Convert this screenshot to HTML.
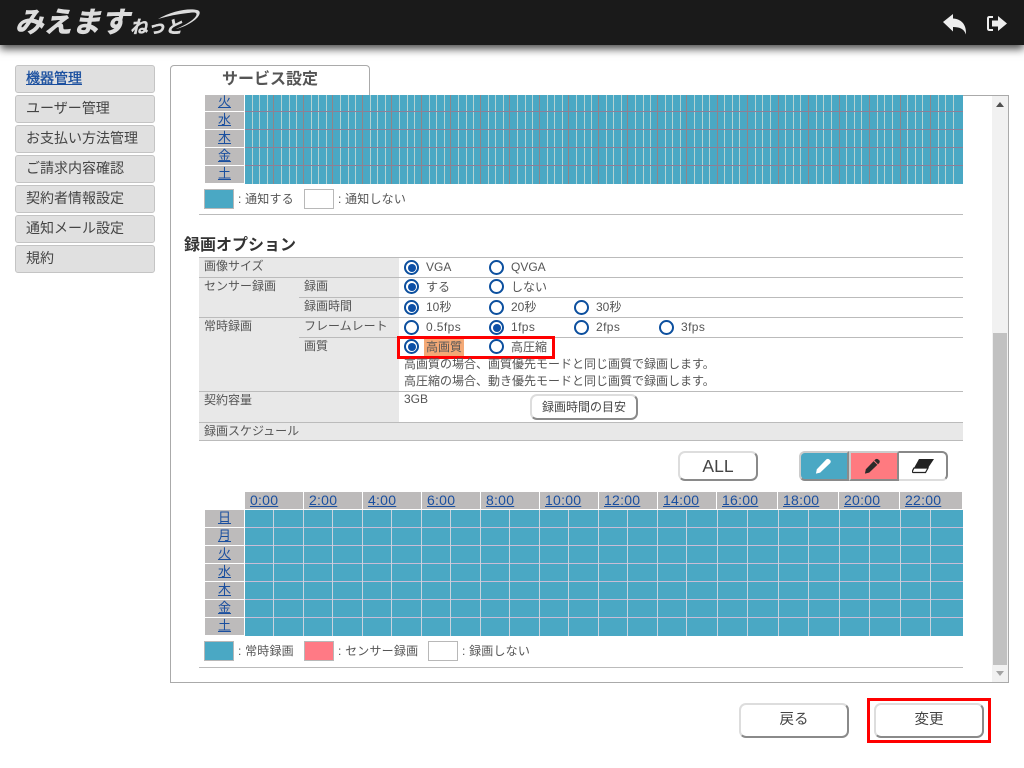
<!DOCTYPE html>
<html lang="ja"><head><meta charset="utf-8"><title>みえますねっと</title>
<style>
*{box-sizing:border-box}
html,body{margin:0;padding:0}
body{width:1024px;height:768px;position:relative;overflow:hidden;background:#fff;font-family:"Liberation Sans","Noto Sans CJK JP",sans-serif;color:#555}
.a,.t,.l,.r,.d,.n,.h,.sq{position:absolute}
.t{font-size:12px;line-height:16px;white-space:nowrap}
.g{letter-spacing:.2px}
.f{letter-spacing:.4px}
.l{height:1px;background:#bbb}
.n{left:15px;width:140px;height:28px;background:#e0e0e0;border:1px solid #c4c4c4;border-radius:3px;font-size:14px;line-height:25px;padding-left:10px;color:#444;white-space:nowrap}
.r{width:15px;height:15px;border:2px solid #0c4f9e;border-radius:50%;background:#fff}
.r.on:after{content:"";position:absolute;left:1.5px;top:1.5px;width:8px;height:8px;border-radius:50%;background:#0c4fa6}
.d{left:205px;width:39px;height:17px;background:#bdbbbb;text-align:center;font-size:13px;line-height:15px;color:#1a4f9f;text-decoration:underline;overflow:hidden}
.h{top:492px;height:17px;background:#bdbbbb;font-size:14px;line-height:16px;color:#1a4f9f;padding-left:5px;white-space:nowrap;letter-spacing:.25px}
.h u{text-decoration:underline}
.sq{width:30px;height:20px;border:1px solid #b8b8b8}
.btn{position:absolute;background:#fff;border:2px solid #ddd;border-right-color:#8a8a8a;border-bottom-color:#8a8a8a;border-radius:7px;text-align:center;color:#444;white-space:nowrap}
</style></head><body>

<div class="a" style="left:0;top:0;width:1024px;height:45px;background:#1a1a1a;box-shadow:0 4px 8px rgba(0,0,0,.7)"></div>
<div class="t" style="left:15px;top:4px;font-size:28.500px;line-height:38px;font-weight:700;font-style:italic;color:#dcdcdc;-webkit-text-stroke:.7px #dcdcdc">みえます</div>
<div class="t" style="left:130px;top:14px;font-size:17.500px;line-height:26px;font-weight:700;font-style:italic;color:#dcdcdc;-webkit-text-stroke:.4px #dcdcdc">ねっと</div>
<svg class="a" style="left:150px;top:5px" width="55" height="28" viewBox="0 0 55 28"><path d="M8 14C22 6 38 3 47 5C52 6 50 12 42 17C36 21 30 23 26 24C33 21 43 16 46 11C48 7 44 7 38 8C28 9 18 11 8 14Z" fill="#dcdcdc"/></svg>
<svg class="a" style="left:942px;top:13px" width="26" height="23" viewBox="0 0 26 23"><path d="M1 9L11 1V5.500C19 6 24.500 11 24 21.500C22 15.500 17 14 11 14V18.500Z" fill="#eee"/></svg>
<svg class="a" style="left:986px;top:14px" width="22" height="20" viewBox="0 0 22 20"><path d="M7 3H3.500Q2 3 2 4.500V14.500Q2 16 3.500 16H7" fill="none" stroke="#eee" stroke-width="2"/><path d="M6 6.500H12V2L21 9.500L12 17V12.500H6Z" fill="#eee"/></svg>

<div class="n" style="top:65px;color:#1a4f9f;-webkit-text-stroke:.35px #1a4f9f;text-decoration:underline">機器管理</div>
<div class="n" style="top:95px">ユーザー管理</div>
<div class="n" style="top:125px">お支払い方法管理</div>
<div class="n" style="top:155px">ご請求内容確認</div>
<div class="n" style="top:185px">契約者情報設定</div>
<div class="n" style="top:215px">通知メール設定</div>
<div class="n" style="top:245px">規約</div>

<div class="a" style="left:170px;top:95px;width:839px;height:588px;border:1px solid #aaa"></div>
<div class="a" style="left:170px;top:65px;width:200px;height:31px;background:#fff;border:1px solid #aaa;border-bottom:0;border-radius:4px 4px 0 0;text-align:center;font-size:16px;font-weight:700;line-height:28px;color:#555">サービス設定</div>

<div class="a" style="left:992px;top:96px;width:16px;height:586px;background:#f1f1f1"></div>
<div class="a" style="left:993px;top:333px;width:14px;height:332px;background:#c1c1c1"></div>
<svg class="a" style="left:992px;top:100px" width="16" height="8"><path d="M4 7L8 2L12 7Z" fill="#505050"/></svg>
<svg class="a" style="left:992px;top:669px" width="16" height="8"><path d="M4 2L8 7L12 2Z" fill="#a3a3a3"/></svg>

<div class="d" style="top:95px;height:16px;line-height:14px">火</div>
<div class="d" style="top:112px">水</div>
<div class="d" style="top:130px">木</div>
<div class="d" style="top:148px">金</div>
<div class="d" style="top:166px">土</div>

<svg class="a" style="left:245px;top:95px" width="718" height="89" viewBox="0 0 718 89" shape-rendering="crispEdges">
<rect width="718" height="89" fill="#4aa8c4"/>
<path d="M7.500 0V89M14.500 0V89M22.500 0V89M36.500 0V89M44.500 0V89M51.500 0V89M66.500 0V89M73.500 0V89M81.500 0V89M95.500 0V89M103.500 0V89M110.500 0V89M125.500 0V89M132.500 0V89M140.500 0V89M154.500 0V89M162.500 0V89M169.500 0V89M184.500 0V89M191.500 0V89M199.500 0V89M213.500 0V89M221.500 0V89M228.500 0V89M243.500 0V89M250.500 0V89M258.500 0V89M272.500 0V89M280.500 0V89M287.500 0V89M302.500 0V89M309.500 0V89M317.500 0V89M331.500 0V89M339.500 0V89M346.500 0V89M361.500 0V89M368.500 0V89M376.500 0V89M390.500 0V89M398.500 0V89M405.500 0V89M420.500 0V89M427.500 0V89M435.500 0V89M449.500 0V89M457.500 0V89M464.500 0V89M479.500 0V89M487.500 0V89M494.500 0V89M510.500 0V89M517.500 0V89M525.500 0V89M540.500 0V89M548.500 0V89M555.500 0V89M571.500 0V89M578.500 0V89M586.500 0V89M601.500 0V89M609.500 0V89M616.500 0V89M632.500 0V89M639.500 0V89M647.500 0V89M662.500 0V89M670.500 0V89M677.500 0V89M693.500 0V89M700.500 0V89M708.500 0V89" stroke="#b4d2d2" stroke-width="1"/>
<path d="M28.500 0V89M58.500 0V89M87.500 0V89M117.500 0V89M146.500 0V89M176.500 0V89M205.500 0V89M235.500 0V89M264.500 0V89M294.500 0V89M323.500 0V89M353.500 0V89M382.500 0V89M412.500 0V89M441.500 0V89M472.500 0V89M502.500 0V89M533.500 0V89M563.500 0V89M594.500 0V89M624.500 0V89M655.500 0V89M685.500 0V89" stroke="#8f8588" stroke-width="1"/>
<path d="M0 16.500H718M0 34.500H718M0 52.500H718M0 70.500H718" stroke="#8d7f97" stroke-width="1"/>
</svg>

<div class="sq" style="left:204px;top:189px;background:#4aa8c4"></div>
<div class="t g" style="left:238px;top:191px">: 通知する</div>
<div class="sq" style="left:304px;top:189px;background:#fff"></div>
<div class="t g" style="left:338px;top:191px">: 通知しない</div>
<div class="l" style="left:199px;top:214px;width:764px"></div>

<div class="t" style="left:184px;top:236px;font-size:16px;line-height:20px;font-weight:700;color:#333">録画オプション</div>

<div class="a" style="left:199px;top:257px;width:200px;height:183px;background:#e8e8e8"></div>
<div class="a" style="left:199px;top:423px;width:764px;height:17px;background:#e8e8e8"></div>
<div class="l" style="left:199px;top:257px;width:764px"></div>
<div class="l" style="left:199px;top:277px;width:764px"></div>
<div class="l" style="left:299px;top:297px;width:664px"></div>
<div class="l" style="left:199px;top:317px;width:764px"></div>
<div class="l" style="left:299px;top:337px;width:664px"></div>
<div class="l" style="left:199px;top:391px;width:764px"></div>
<div class="l" style="left:199px;top:422px;width:764px"></div>
<div class="l" style="left:199px;top:440px;width:764px"></div>

<div class="t" style="left:204px;top:258px">画像サイズ</div>
<div class="t" style="left:204px;top:278px">センサー録画</div>
<div class="t" style="left:304px;top:278px">録画</div>
<div class="t" style="left:304px;top:298px">録画時間</div>
<div class="t" style="left:204px;top:318px">常時録画</div>
<div class="t" style="left:304px;top:318px">フレームレート</div>
<div class="t" style="left:304px;top:338px">画質</div>
<div class="t" style="left:204px;top:392px">契約容量</div>
<div class="t" style="left:204px;top:423px">録画スケジュール</div>

<div class="r on" style="left:404px;top:260px"></div><div class="t" style="left:426px;top:259px">VGA</div>
<div class="r" style="left:489px;top:260px"></div><div class="t" style="left:511px;top:259px">QVGA</div>
<div class="r on" style="left:404px;top:279px"></div><div class="t" style="left:426px;top:279px">する</div>
<div class="r" style="left:489px;top:279px"></div><div class="t" style="left:511px;top:279px">しない</div>
<div class="r on" style="left:404px;top:300px"></div><div class="t" style="left:426px;top:299px">10秒</div>
<div class="r" style="left:489px;top:300px"></div><div class="t" style="left:511px;top:299px">20秒</div>
<div class="r" style="left:574px;top:300px"></div><div class="t" style="left:596px;top:299px">30秒</div>
<div class="r" style="left:404px;top:320px"></div><div class="t f" style="left:426px;top:319px">0.5fps</div>
<div class="r on" style="left:489px;top:320px"></div><div class="t f" style="left:511px;top:319px">1fps</div>
<div class="r" style="left:574px;top:320px"></div><div class="t f" style="left:596px;top:319px">2fps</div>
<div class="r" style="left:659px;top:320px"></div><div class="t f" style="left:681px;top:319px">3fps</div>
<div class="a" style="left:424px;top:339px;width:40px;height:17px;background:#f4a976"></div>
<div class="r on" style="left:404px;top:339px"></div><div class="t" style="left:426px;top:339px">高画質</div>
<div class="r" style="left:489px;top:339px"></div><div class="t" style="left:511px;top:339px">高圧縮</div>
<div class="a" style="left:397px;top:336px;width:158px;height:23px;border:3px solid #f00"></div>
<div class="t" style="left:404px;top:356px">高画質の場合、画質優先モードと同じ画質で録画します。</div>
<div class="t" style="left:404px;top:373px">高圧縮の場合、動き優先モードと同じ画質で録画します。</div>
<div class="t" style="left:404px;top:391px">3GB</div>
<div class="btn" style="left:530px;top:394px;width:108px;height:26px;font-size:12px;line-height:22px">録画時間の目安</div>

<div class="btn" style="left:678px;top:451px;width:80px;height:30px;font-size:17.500px;line-height:26px;color:#444">ALL</div>

<div class="a" style="left:799px;top:451px;width:149px;height:30px;border-radius:6px;background:#fff;border:2px solid #ddd;border-left-color:#ccc"></div>
<div class="a" style="left:799px;top:451px;width:50px;height:30px;background:#4aa8c4;border:2px solid #8a8a8a;border-top-color:#ccc;border-left-color:#ccc;border-radius:6px 0 0 6px"></div>
<div class="a" style="left:849px;top:451px;width:50px;height:30px;background:#ff7a80;border:2px solid #8a8a8a;border-top-color:#ccc;border-left-color:#ccc"></div>
<div class="a" style="left:899px;top:451px;width:49px;height:30px;background:#fff;border:2px solid #ddd;border-top-color:#888;border-right-color:#888;border-left:0;border-radius:0 6px 6px 0"></div>
<svg class="a" style="left:814px;top:456px" width="19" height="19" viewBox="0 0 20 20"><path d="M3 14L13 3.500Q14.500 2.500 16 3.500L17.500 5Q18 6.500 17 7.500L6.500 17.500L2 18.500Z" fill="#fff"/></svg>
<svg class="a" style="left:863px;top:456px" width="19" height="19" viewBox="0 0 20 20"><path d="M3 14L13 3.500Q14.500 2.500 16 3.500L17.500 5Q18 6.500 17 7.500L6.500 17.500L2 18.500Z" fill="#2b2b2b"/><path d="M11.500 5L15.500 9" stroke="#ff7a80" stroke-width="1"/></svg>
<svg class="a" style="left:912px;top:456px" width="24" height="20" viewBox="0 0 24 20"><path d="M7 3H22L16 12H2Z" fill="#222"/><path d="M2 12H16L13.500 16.500H1Q-.5 16 2 12Z" fill="#fff" stroke="#222" stroke-width="1.200"/></svg>

<div class="h" style="left:245px;width:58px"><u>0:00</u></div>
<div class="h" style="left:304px;width:58px"><u>2:00</u></div>
<div class="h" style="left:363px;width:58px"><u>4:00</u></div>
<div class="h" style="left:422px;width:58px"><u>6:00</u></div>
<div class="h" style="left:481px;width:58px"><u>8:00</u></div>
<div class="h" style="left:540px;width:58px"><u>10:00</u></div>
<div class="h" style="left:599px;width:58px"><u>12:00</u></div>
<div class="h" style="left:658px;width:58px"><u>14:00</u></div>
<div class="h" style="left:717px;width:60px"><u>16:00</u></div>
<div class="h" style="left:778px;width:60px"><u>18:00</u></div>
<div class="h" style="left:839px;width:60px"><u>20:00</u></div>
<div class="h" style="left:900px;width:62px"><u>22:00</u></div>

<div class="d" style="top:510px">日</div>
<div class="d" style="top:528px">月</div>
<div class="d" style="top:546px">火</div>
<div class="d" style="top:564px">水</div>
<div class="d" style="top:582px">木</div>
<div class="d" style="top:600px">金</div>
<div class="d" style="top:618px">土</div>

<svg class="a" style="left:245px;top:510px" width="718" height="126" viewBox="0 0 718 126" shape-rendering="crispEdges">
<rect width="718" height="126" fill="#4aa8c4"/>
<path d="M0 17.500H718M0 35.500H718M0 53.500H718M0 71.500H718M0 89.500H718M0 107.500H718" stroke="#c8bdd6" stroke-width="1"/>
<path d="M28.500 0V126M58.500 0V126M87.500 0V126M117.500 0V126M146.500 0V126M176.500 0V126M205.500 0V126M235.500 0V126M264.500 0V126M294.500 0V126M323.500 0V126M353.500 0V126M382.500 0V126M412.500 0V126M441.500 0V126M472.500 0V126M502.500 0V126M533.500 0V126M563.500 0V126M594.500 0V126M624.500 0V126M655.500 0V126M685.500 0V126" stroke="#c9d3de" stroke-width="1"/>
</svg>

<div class="sq" style="left:204px;top:641px;background:#4aa8c4"></div>
<div class="t g" style="left:238px;top:643px">: 常時録画</div>
<div class="sq" style="left:304px;top:641px;background:#ff7a85"></div>
<div class="t g" style="left:338px;top:643px">: センサー録画</div>
<div class="sq" style="left:428px;top:641px;background:#fff"></div>
<div class="t g" style="left:462px;top:643px">: 録画しない</div>
<div class="l" style="left:199px;top:667px;width:764px"></div>

<div class="btn" style="left:739px;top:703px;width:110px;height:35px;font-size:14.500px;line-height:30px;color:#444">戻る</div>
<div class="btn" style="left:874px;top:703px;width:110px;height:35px;font-size:14.500px;line-height:30px;color:#444">変更</div>
<div class="a" style="left:867px;top:698px;width:124px;height:45px;border:3px solid #f00"></div>
</body></html>
